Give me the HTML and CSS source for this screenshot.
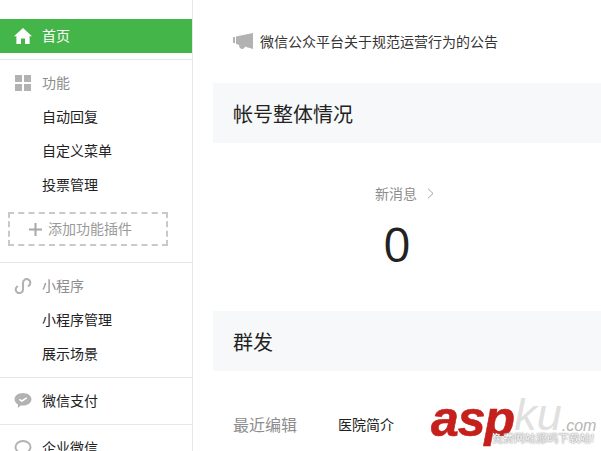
FILE: index.html
```html
<!DOCTYPE html>
<html lang="zh">
<head>
<meta charset="utf-8">
<title>首页</title>
<link rel="stylesheet" href="styles.css">
</head>
<body>
<div class="page">
  <nav class="sidebar">
    <a class="home">
      <svg class="icon" viewBox="0 0 18 16"><path fill="#fff" d="M9 0 L18 8.200 L15.600 8.200 L15.600 16 L11 16 L11 10.600 L7 10.600 L7 16 L2.400 16 L2.400 8.200 L0 8.200 Z"/></svg>
      <span>首页</span>
    </a>
    <section class="group first">
      <div class="heading">
        <svg class="icon" viewBox="0 0 16 16"><path fill="#b2b2b2" d="M0 0h7v7H0zM9 0h7v7H9zM0 9h7v7H0zM9 9h7v7H9z"/></svg>
        <span>功能</span>
      </div>
      <a class="item">自动回复</a>
      <a class="item">自定义菜单</a>
      <a class="item">投票管理</a>
      <a class="add">
        <svg class="plus" viewBox="0 0 13 13"><path fill="#a8a8a8" d="M5.500 0h2v5.500H13v2H7.500V13h-2V7.500H0v-2h5.500z"/></svg>
        <span>添加功能插件</span>
      </a>
    </section>
    <section class="group">
      <div class="heading">
        <svg class="icon" viewBox="0 0 18 17"><path fill="none" stroke="#b2b2b2" stroke-width="2.200" stroke-linecap="round" d="M2.800 9A3.900 3.900 0 1 0 9 12V5a3.900 3.900 0 1 1 6 3.300"/></svg>
        <span>小程序</span>
      </div>
      <a class="item">小程序管理</a>
      <a class="item">展示场景</a>
    </section>
    <section class="group">
      <a class="row">
        <svg class="icon" viewBox="0 0 18 17"><path fill="#b2b2b2" d="M9 0c5 0 9 3 9 6.700s-4 6.700-9 6.700c-.8 0-1.600-.1-2.300-.2L3.500 16l.2-3.800C1.400 11 0 9 0 6.700 0 3 4 0 9 0z"/><path fill="none" stroke="#fff" stroke-width="1.600" d="M5 6.800l2.800 1.700 5.200-3.300"/></svg>
        <span>微信支付</span>
      </a>
    </section>
    <section class="group">
      <a class="row">
        <svg class="icon" viewBox="0 0 18 17"><path fill="none" stroke="#b2b2b2" stroke-width="2" d="M9 1c4.400 0 8 2.800 8 6.500S13.400 14 9 14 1 11.200 1 7.500 4.600 1 9 1z"/></svg>
        <span>企业微信</span>
      </a>
    </section>
  </nav>
  <main class="content">
    <div class="notice">
      <svg class="horn" viewBox="0 0 20 17"><path fill="#b2b2b2" d="M0 4h2v6H0zM3 3.500 20 0v16L3 11zM6 12l6 1.600c-.3 1.800-1.500 2.600-3 2.400-2-.2-3-1.800-3-4z"/></svg>
      <span class="notice-text">微信公众平台关于规范运营行为的公告</span>
    </div>
    <h2 class="bar">帐号整体情况</h2>
    <div class="stat">
      <div class="stat-label">新消息<svg class="chev" viewBox="0 0 7 11"><path fill="none" stroke="#a3a3a3" d="M1 .7 6 5.500 1 10.300"/></svg></div>
      <div class="stat-value">0</div>
    </div>
    <h2 class="bar">群发</h2>
    <div class="recent">
      <span class="recent-label">最近编辑</span>
      <span class="recent-title">医院简介</span>
    </div>
  </main>
  <div class="mark">
    <span class="mark-asp">asp</span><span class="mark-ku">ku</span><span class="mark-com">.com</span>
    <div class="mark-sub">免费网站源码下载站!</div>
  </div>
</div>
</body>
</html>
```
FILE: styles.css
```css
* { box-sizing: border-box; }
html, body { margin: 0; height: 100%; overflow: hidden; background: #fff; }
body { font-family: "Noto Sans CJK SC", "Liberation Sans", sans-serif; color: #222; font-size: 14px; }
h2 { margin: 0; font-weight: 400; }
.page { position: relative; display: flex; width: 601px; height: 451px; overflow: hidden; }

.sidebar { flex: none; width: 193px; height: 451px; padding-top: 19px; border-right: 1px solid #e7e7eb; overflow: hidden; }
.icon { flex: none; width: 18px; height: 16px; }
.home { display: flex; align-items: center; gap: 10px; height: 34px; margin-bottom: 6px; padding-left: 14px; background: #44b549; color: #fff; }
.home span, .heading span, .row span { line-height: 32px; height: 34px; }
.group { border-top: 1px solid #e7e7eb; padding-bottom: 6px; }
.first { padding-bottom: 16px; }
.heading, .row { display: flex; align-items: center; gap: 10px; height: 34px; margin-top: 6px; padding-left: 14px; }
.heading { color: #8d8d8d; }
.row { color: #222; }
.item { display: block; height: 34px; line-height: 32px; padding-left: 42px; }
.add { display: flex; align-items: center; gap: 6px; height: 34px; margin: 10px 24px 0 8px; padding-left: 19px; border: 2px dashed #c9c9c9; color: #9a9a9a; }
.add span { line-height: 28px; height: 30px; }
.plus { flex: none; width: 13px; height: 13px; }

.content { flex: 1; min-width: 0; padding-left: 20px; }
.notice { display: flex; align-items: center; gap: 7px; height: 83px; padding-left: 20px; font-size: 14px; color: #353535; }
.notice-text { line-height: 22px; height: 24px; }
.horn { flex: none; width: 20px; height: 17px; }
.bar { height: 60px; line-height: 62px; padding-left: 20px; background: #f6f8f9; font-size: 20px; color: #222; }
.stat { height: 168px; padding: 38px 20px 0 0; text-align: center; }
.stat-label { display: flex; justify-content: center; align-items: center; gap: 10px; height: 24px; line-height: 24px; padding-left: 15px; font-size: 14px; color: #8d8d8d; }
.chev { width: 7px; height: 11px; }
.stat-value { margin-top: 9px; font-family: "Open Sans", "Liberation Sans", sans-serif; font-size: 48px; line-height: 60px; color: #222; }
.recent { display: flex; align-items: center; height: 108px; padding: 0 0 2px 20px; }
.recent-label { width: 105px; font-size: 16px; color: #8d8d8d; }
.recent-title { font-size: 14px; color: #222; }

.mark { position: absolute; left: 431px; top: 391px; width: 170px; height: 60px; font-family: "Liberation Sans", sans-serif; line-height: 56px; white-space: nowrap; }
.mark-asp { font-size: 50px; font-weight: 700; font-style: italic; color: #c5201c; letter-spacing: -1px; -webkit-text-stroke: 0.6px #c5201c; }
.mark-ku { position: relative; bottom: 6px; font-size: 45px; font-style: italic; color: #e0e0e0; }
.mark-com { position: relative; bottom: 5px; font-size: 16px; font-style: italic; color: #b5b5b5; }
.mark-sub { position: absolute; left: 61px; top: 40px; font-size: 11px; line-height: 14px; color: #fff; text-shadow: 0 0 2px #888, 0 0 1px #888; }
```
